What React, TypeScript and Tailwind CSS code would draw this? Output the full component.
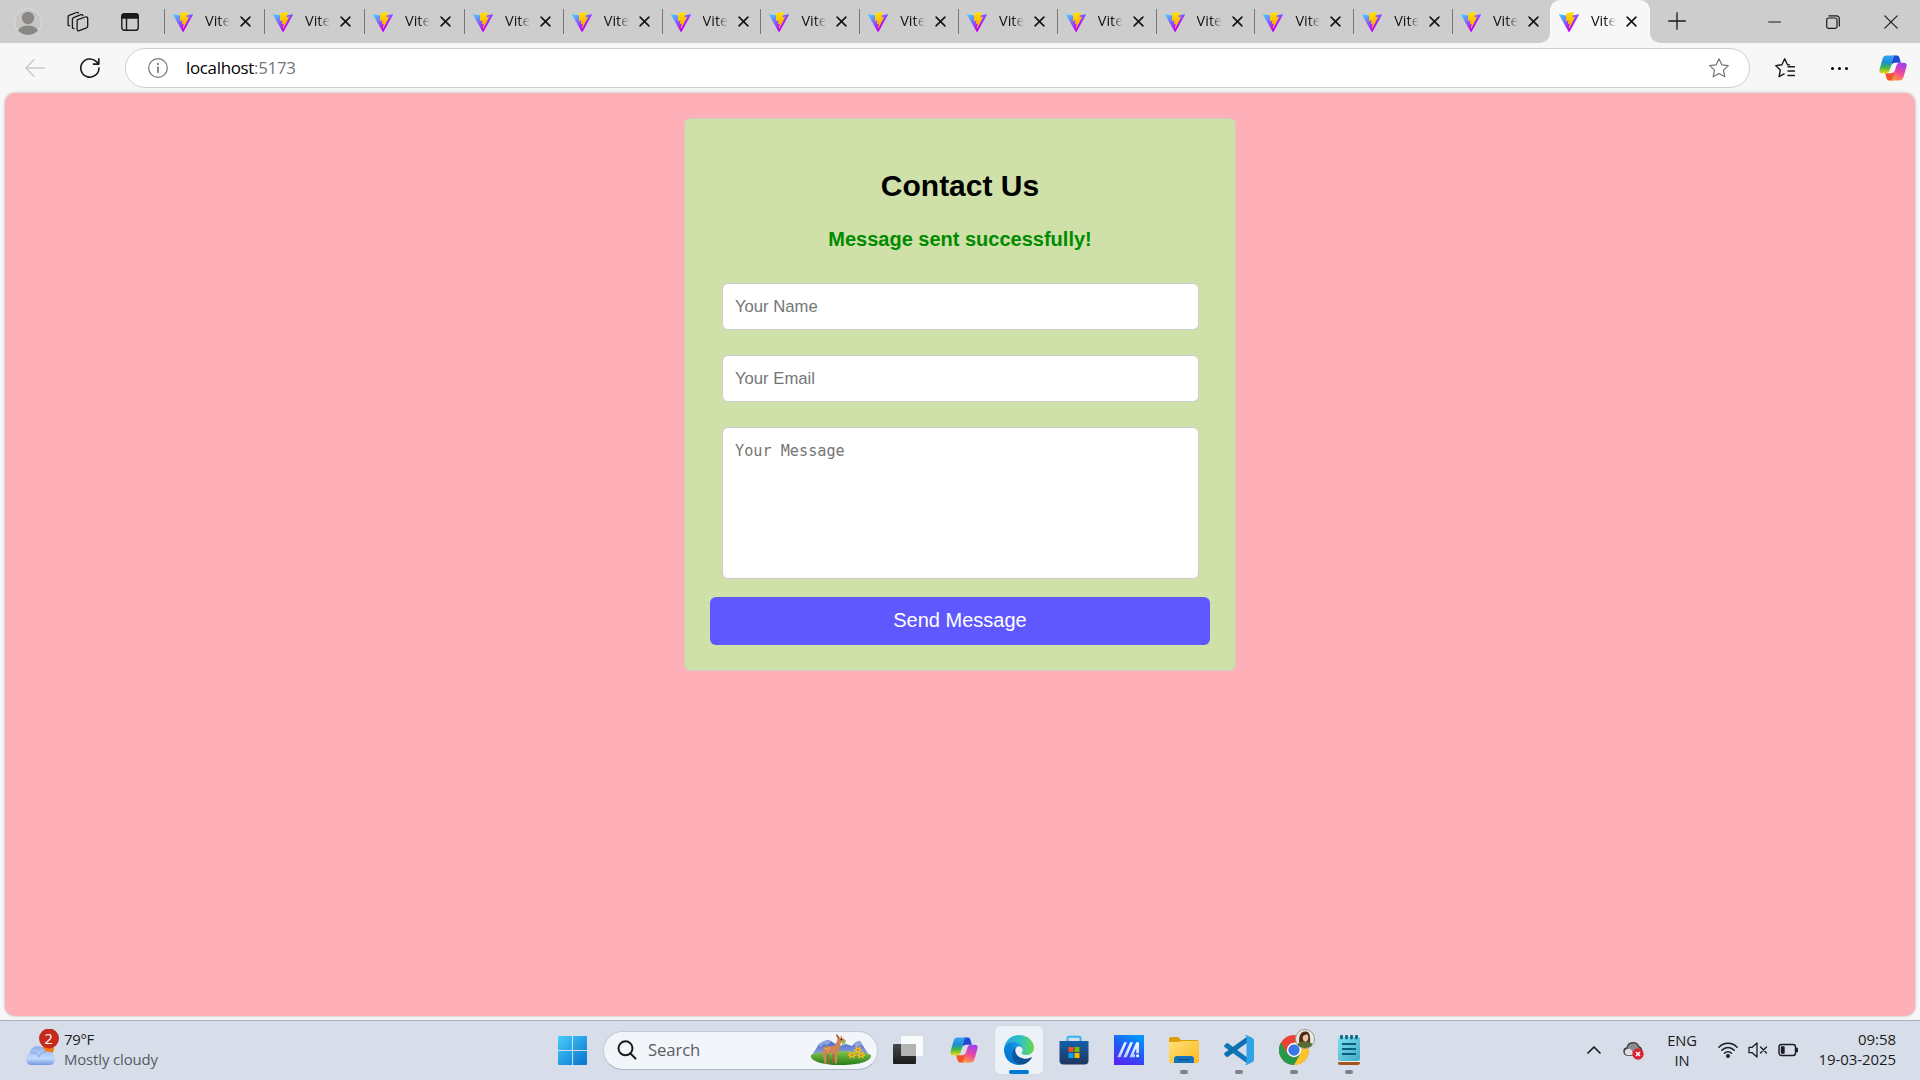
import type { ReactNode } from 'react';

function ViteLogo() {
  return (
    <svg viewBox="0 0 256 257" className="h-5 w-5 shrink-0" aria-hidden="true">
      <defs>
        <linearGradient id="viteA" x1="-.828%" x2="57.636%" y1="7.652%" y2="78.411%">
          <stop offset="0%" stopColor="#41D1FF" />
          <stop offset="100%" stopColor="#BD00FF" />
        </linearGradient>
        <linearGradient id="viteB" x1="43.376%" x2="50.316%" y1="2.242%" y2="89.03%">
          <stop offset="0%" stopColor="#FFEA00" />
          <stop offset="8%" stopColor="#FFDD00" />
          <stop offset="100%" stopColor="#FFA800" />
        </linearGradient>
      </defs>
      <path fill="url(#viteA)" d="M255.153 37.938L134.897 252.976c-2.483 4.44-8.862 4.466-11.382.048L.875 37.958c-2.746-4.814 1.371-10.646 6.827-9.67l120.385 21.517a6.537 6.537 0 0 0 2.322-.004l117.867-21.483c5.438-.991 9.574 4.796 6.877 9.62Z" />
      <path fill="url(#viteB)" d="M185.432.063L96.44 17.501a3.268 3.268 0 0 0-2.634 3.014l-5.474 92.456a3.268 3.268 0 0 0 3.997 3.378l24.777-5.718c2.318-.535 4.413 1.507 3.936 3.838l-7.361 36.047c-.495 2.426 1.782 4.5 4.151 3.78l15.304-4.649c2.372-.72 4.652 1.36 4.15 3.788l-11.698 56.621c-.732 3.542 3.979 5.473 5.943 2.437l1.313-2.028l72.516-144.72c1.215-2.423-.88-5.186-3.54-4.672l-25.505 4.922c-2.396.462-4.435-1.77-3.759-4.114l16.646-57.705c.677-2.35-1.37-4.583-3.769-4.113Z" />
    </svg>
  );
}

function Copilot({ className }: { className: string }) {
  return (
    <svg viewBox="0 0 28 26" className={className} aria-hidden="true">
      <defs>
        <linearGradient id="cpL" x1="0" y1="0" x2="0" y2="1">
          <stop offset="0" stopColor="#36a2f8" />
          <stop offset=".4" stopColor="#1d8fd0" />
          <stop offset=".65" stopColor="#39b54a" />
          <stop offset="1" stopColor="#f2dc10" />
        </linearGradient>
        <linearGradient id="cpR" x1=".6" y1="0" x2=".3" y2="1">
          <stop offset="0" stopColor="#a63af0" />
          <stop offset=".55" stopColor="#ef4a9b" />
          <stop offset="1" stopColor="#ff9a3d" />
        </linearGradient>
      </defs>
      <path d="M14 .5h3.8c1.5 0 2.2.8 2.6 2.2l1.5 5h-5.6c-2.5 0-3.5 1.5-4.1 3.4Z" fill="#2346d8" />
      <path d="M14 25.5h-3.600c-1.500 0-2.300-.900-2.800-2.300l-1.500-4.900h5.600c2.500 0 3.500-1.500 4.100-3.500Z" fill="#f5542a" />
      <path d="M7.500 .5h9.300c-1.400 .2-2.100 1.300-2.600 3l-3.500 11.500c-.7 2.200-1.900 3.300-4.100 3.300H3.200C.8 18.300-.1 16.600.5 14.400L3.500 4C4.200 1.600 5.400 .5 7.500 .5Z" fill="url(#cpL)" />
      <path d="M20.500 25.500h-9.300c1.400-.2 2.100-1.300 2.600-3l3.500-11.500c.7-2.200 1.900-3.300 4.100-3.300h3.400c2.400 0 3.300 1.700 2.700 3.900L24.500 22c-.7 2.400-1.900 3.500-4 3.500Z" fill="url(#cpR)" />
    </svg>
  );
}

function Line({ children, className, viewBox = '0 0 20 20', width = 1.3 }: { children: ReactNode; className: string; viewBox?: string; width?: number }) {
  return (
    <svg viewBox={viewBox} className={className} fill="none" stroke="currentColor" strokeWidth={width} strokeLinecap="round" strokeLinejoin="round" aria-hidden="true">
      {children}
    </svg>
  );
}

function TabContent() {
  return (
    <>
      <ViteLogo />
      <span className="ml-3 w-[25px] overflow-hidden bg-linear-to-r from-[#111] from-55% to-transparent bg-clip-text pb-0.5 text-[14.500px] leading-5 text-transparent">Vite</span>
      <Line className="ml-[10px] h-[11px] w-[11px] shrink-0 text-[#111]" viewBox="0 0 12 12" width={1.7}>
        <path d="M1.200 1.200l9.600 9.600M10.800 1.200l-9.600 9.600" />
      </Line>
    </>
  );
}

function TitleBar() {
  return (
    <div className="flex h-[43px] shrink-0 bg-[#cdcdcd] text-[#1a1a1a]">
      <div className="flex w-[164px] items-center pl-[14px]">
        <svg viewBox="0 0 28 28" className="h-7 w-7">
          <defs><clipPath id="avatar"><circle cx="14" cy="14" r="13" /></clipPath></defs>
          <circle cx="14" cy="14" r="13.300" fill="#c8c6c4" stroke="#dddbd8" />
          <g clipPath="url(#avatar)" fill="#8a8886"><circle cx="14" cy="10" r="6.200" /><ellipse cx="14" cy="24.500" rx="10.500" ry="7" /></g>
        </svg>
        <Line className="ml-[25px] h-[22px] w-[22px]" viewBox="0 0 22 22" width={1.3}>
          <path d="M10.800 8.600l7.700-2.600c1.300-.4 2.200.2 2.200 1.500v7.600c0 .8-.4 1.400-1.100 1.700l-7.400 2.900c-1.200.5-2.100 0-2.100-1.200v-8.200c0-.8.200-1.400.7-1.700ZM7 17.400c-1 .3-1.600-.2-1.600-1.200V8.300c0-.8.400-1.400 1.100-1.700l7.500-2.900c1-.3 1.700 0 1.900.8M2.600 14.700c-1 .3-1.500-.2-1.500-1.200V6c0-.8.300-1.300 1-1.600L9.500 1.500c.9-.3 1.600-.1 1.900.6" />
        </Line>
        <Line className="ml-[32px] h-[18px] w-[18px]" viewBox="0 0 18 18" width={1.4}>
          <rect x=".8" y=".8" width="16.400" height="16.400" rx="2.500" />
          <path d="M1 5V3a2 2 0 012-2h12a2 2 0 012 2v2Z" fill="currentColor" /><path d="M5.500 5v12" />
        </Line>
      </div>
      {Array.from({ length: 14 }, (_, i) => (
        <div key={i} className={`flex items-center ${i < 3 ? 'w-[100px]' : i < 13 ? 'w-[98.8px]' : 'w-[98px]'}`}>
          <span className="h-[25px] w-px bg-[#777]" />
          <span className="flex items-center pl-2"><TabContent /></span>
        </div>
      ))}
      <div className="relative flex w-[100px] items-center rounded-t-[10px] bg-[#f7f7f7] pl-[9px]">
        <svg viewBox="0 0 10 10" className="absolute bottom-0 -left-[10px] h-[10px] w-[10px]"><path d="M10 0v10H0A10 10 0 0010 0Z" fill="#f7f7f7" /></svg>
        <TabContent />
        <svg viewBox="0 0 10 10" className="absolute -right-[10px] bottom-0 h-[10px] w-[10px]"><path d="M0 0v10h10A10 10 0 010 0Z" fill="#f7f7f7" /></svg>
      </div>
      <div className="flex w-[54px] items-center justify-center pb-px">
        <Line className="h-[18px] w-[18px]" viewBox="0 0 18 18" width={1.3}><path d="M9 .7v16.600M.7 9h16.600" /></Line>
      </div>
      <div className="ml-auto flex items-center gap-[44px] pr-[22px]">
        <Line className="mr-px h-[14px] w-[14px]" viewBox="0 0 14 14" width={1.2}><path d="M1.700 7h12" /></Line>
        <Line className="h-[14px] w-[14px]" viewBox="0 0 14 14" width={1.2}><rect x=".7" y="3" width="10.300" height="10.300" rx="1.800" /><path d="M3 .8h7.500A2.800 2.800 0 0113.300 3.600V11" /></Line>
        <Line className="h-[14px] w-[14px]" viewBox="0 0 14 14" width={1.2}><path d="M.8.8l12.400 12.400M13.200.8L.8 13.200" /></Line>
      </div>
    </div>
  );
}

function Toolbar() {
  return (
    <div className="flex h-[50px] shrink-0 items-center bg-[#f7f7f7] text-[#1a1a1a]">
      <div className="flex w-[70px] justify-center">
        <Line className="h-5 w-5 text-[#c8c8c8]"><path d="M19.500 10H1M9 1.800L.8 10 9 18.200" /></Line>
      </div>
      <div className="flex w-10 justify-center">
        <Line className="h-5 w-5" width={1.6}><path d="M19 10a9.100 9.100 0 11-2.900-6.600l2.400 2.300M18.800.8v5.300h-5.400" /></Line>
      </div>
      <div className="ml-[15px] flex h-10 w-[1625px] items-center rounded-full border border-[#cfcfcf] bg-white pr-5 pl-[22px]">
        <Line className="h-5 w-5 text-[#747474]" width={1.200}><circle cx="10" cy="10" r="9.300" /><path d="M10 9v5.300" strokeWidth="1.700" /><circle cx="10" cy="6" r=".5" fill="currentColor" /></Line>
        <span className="ml-[18px] pb-px text-[16.900px] tracking-[-0.300px] text-black">localhost<span className="text-[#767676]">:5173</span></span>
        <Line className="ml-auto h-5 w-5 text-[#747474]" width={1.200}><path d="M10 .8l2.800 6 6.500.8-4.800 4.500 1.300 6.600L10 15.500l-5.800 3.200 1.300-6.600L.7 7.600l6.500-.8Z" /></Line>
      </div>
      <div className="flex w-[70px] justify-center">
        <Line className="h-5 w-5" width={1.400}><path d="M14.500 6.900l-2-.2L9.700.8 6.900 6.800l-6.200.8 4.600 4.500-1.200 6.600 5-2.800M13 8.800h6.500M13 13h6.500M13 17.500h6.500" /></Line>
      </div>
      <div className="flex w-[39px] items-center justify-center gap-1">
        <i className="h-[3px] w-[3px] rounded-full bg-black" /><i className="h-[3px] w-[3px] rounded-full bg-black" /><i className="h-[3px] w-[3px] rounded-full bg-black" />
      </div>
      <Copilot className="ml-5 h-[26px] w-7" />
    </div>
  );
}

function ContactForm() {
  return (
    <form className="mx-auto mt-[25px] flex h-[553px] w-[552px] flex-col items-center rounded-[6px] border border-[#cccccc] bg-[#cfe0a8] px-[25px] font-['Liberation_Sans',Arial,sans-serif]" onSubmit={(e) => e.preventDefault()}>
      <h2 className="mt-[49px] text-[30px] leading-[36px] font-bold text-black">Contact Us</h2>
      <p className="mt-[23px] text-[20px] leading-6 font-bold text-[#008b00]">Message sent successfully!</p>
      <input className="mt-[32px] ml-px h-[47px] w-[477px] shrink-0 rounded-[6px] border border-[#cccccc] bg-white px-[12px] text-[16.670px] text-black placeholder:text-[#757575]" placeholder="Your Name" />
      <input className="mt-[25px] ml-px h-[47px] w-[477px] shrink-0 rounded-[6px] border border-[#cccccc] bg-white px-[12px] text-[16.670px] text-black placeholder:text-[#757575]" placeholder="Your Email" />
      <textarea className="mt-[25px] ml-px h-[152px] w-[477px] shrink-0 resize-none rounded-[6px] border border-[#cccccc] bg-white px-[12px] py-[13px] font-['DejaVu_Sans_Mono',monospace] text-[15.200px] leading-5 text-black placeholder:text-[#757575]" placeholder="Your Message" />
      <button className="mt-[18px] h-[48px] w-[500px] shrink-0 rounded-[6px] bg-[#6058ff] pb-[2px] text-[20px] text-white">Send Message</button>
    </form>
  );
}

function Deer() {
  return (
    <svg viewBox="0 0 62 32" className="h-8 w-[62px]" aria-hidden="true">
      <defs>
        <linearGradient id="hill" x1="0" y1="0" x2="0" y2="1"><stop stopColor="#4562c0" /><stop offset="1" stopColor="#8fa6e4" /></linearGradient>
        <linearGradient id="grass" x1="0" y1="0" x2="0" y2="1"><stop stopColor="#86c44a" /><stop offset="1" stopColor="#227d16" /></linearGradient>
      </defs>
      <path d="M2 21L9 10l5-3 5-1 5 3 6 3 6-2 6 2 4-4 4-1 9 14Z" fill="url(#hill)" />
      <path d="M9 10l5-3 5-1 2 2-4 3-3-1-4 3ZM46 8l4-1 3 5-3-1-3 3-3-4Z" fill="#8fa6e2" />
      <path d="M1 21c10-5 49-5 60 0 1 5-9 10-30 10S-1 26 1 21Z" fill="url(#grass)" />
      <path d="M13 13.500c2-2 9-.5 12-2l2-4.500c0-2 1-3.500 3-3.500 2.500 0 5 1.700 5 3s-2 1.800-4 2l-2 8-2 3v10h-1.800l-1-9-5.200-1.500-3 1.500.5 9.500h-1.800l-2-9.500Z" fill="#d08453" />
      <path d="M28 5l-2-4 .5-1 3 3.500M31 3.500V1l1 2.500" fill="#93431f" />
      <path d="M18 20l1 10M23.500 20l-.5 9" stroke="#a85f35" strokeWidth="1.400" fill="none" />
      <circle cx="31.300" cy="5.500" r=".7" fill="#311" /><path d="M15 14.500h1.500M18 14h1.500M17 16h1.500" stroke="#ffdeb0" strokeWidth=".8" />
      <path d="M32 8l4-2-1 4-3 1Z" fill="#8ac44b" />
      {[[42, 21], [48, 16], [51, 21]].map(([x, y]) => (
        <g key={x} transform={`translate(${x} ${y})`} stroke="#f5bd28" strokeWidth="1.700" strokeLinecap="round">
          <path d="M-3.500 0h7M-2-2.500l4 5M2-2.500l-4 5" /><circle r=".7" stroke="#d47c10" fill="#d47c10" strokeWidth=".8" />
        </g>
      ))}
    </svg>
  );
}

const appIcons: { name: string; state: 'none' | 'open' | 'active'; art: ReactNode }[] = [
  { name: 'Task view', state: 'none', art: (
    <svg viewBox="0 0 30 30" className="mr-[2px] h-[30px] w-[30px]">
      <defs><linearGradient id="tv" x1="0" y1="0" x2="0" y2="1"><stop stopColor="#484848" /><stop offset="1" stopColor="#1b1b1b" /></linearGradient></defs>
      <rect x="0" y="9" width="23" height="20" rx="1" fill="url(#tv)" /><rect x="8" y="1" width="22" height="20" rx="1" fill="#fff" opacity=".84" /><path d="M8 9h15v12H8Z" fill="#b4b4b4" />
    </svg>) },
  { name: 'Copilot', state: 'none', art: <Copilot className="h-[26px] w-7" /> },
  { name: 'Edge', state: 'active', art: (
    <svg viewBox="0 0 256 256" className="h-[30px] w-[30px]">
      <defs>
        <linearGradient id="edA" x1="63" y1="177" x2="241" y2="177" gradientUnits="userSpaceOnUse"><stop stopColor="#0c59a4" /><stop offset="1" stopColor="#114a8b" /></linearGradient>
        <linearGradient id="edB" x1="157" y1="101" x2="46" y2="222" gradientUnits="userSpaceOnUse"><stop stopColor="#1b9de2" /><stop offset=".5" stopColor="#0a82d8" /><stop offset="1" stopColor="#0078d4" /></linearGradient>
        <linearGradient id="edC" x1="20" y1="70" x2="250" y2="90" gradientUnits="userSpaceOnUse"><stop stopColor="#2aa8d8" /><stop offset=".5" stopColor="#2fc2c8" /><stop offset="1" stopColor="#65d850" /></linearGradient>
      </defs>
      <path fill="url(#edA)" d="M231 190.500c-3.400 1.800-6.900 3.400-10.500 4.700a101.900 101.900 0 01-35.900 6.500c-47.300 0-88.500-32.500-88.500-74.300a31.500 31.500 0 0116.400-27.300c-42.800 1.800-53.800 46.400-53.800 72.500 0 73.900 68.100 81.400 82.800 81.400 7.900 0 19.800-2.300 27-4.600l1.300-.4a128.300 128.300 0 0066.600-52.800 4 4 0 00-5.400-5.700Z" />
      <path fill="url(#edB)" d="M105.700 241.400a79.200 79.200 0 01-22.700-21.300 80.700 80.700 0 0129.500-120c3.200-1.500 8.500-4.100 15.600-4a32.400 32.400 0 0125.700 13 31.900 31.900 0 016.300 18.700c0-.2 24.500-79.600-80-79.600C36.100 48.200 0 90 0 126.600a130.200 130.200 0 0012.100 56 128 128 0 00156.400 67.100 75.500 75.500 0 01-62.800-8.300Z" />
      <path fill="url(#edC)" d="M152.300 148.900c-.9 1-3.400 2.500-3.400 5.600 0 2.600 1.700 5.200 4.800 7.300 14.400 10.100 41.700 8.700 41.800 8.700a59.700 59.700 0 0030.300-8.300A61.500 61.500 0 00256 109.200c.3-22.400-8-37.300-11.300-43.900C223.500 23.900 177.700 0 128 0A128 128 0 000 126.200c.5-36.500 36.800-66 80-66 3.500 0 23.500.3 42 10.100 16.300 8.500 24.900 18.900 30.800 29.200 6.200 10.600 7.300 24.100 7.300 29.500s-2.700 13.300-7.800 19.900Z" />
    </svg>) },
  { name: 'Store', state: 'none', art: (
    <svg viewBox="0 0 30 30" className="h-[30px] w-[30px]">
      <defs><linearGradient id="st" x1="0" y1="0" x2="0" y2="1"><stop stopColor="#1260a8" /><stop offset="1" stopColor="#21355d" /></linearGradient></defs>
      <path d="M8.500 7V3.300a1.500 1.500 0 011.500-1.500h10a1.500 1.500 0 011.500 1.500V7" fill="none" stroke="#31b5ef" strokeWidth="2" />
      <path d="M.5 6h29v19.500a4 4 0 01-4 4h-21a4 4 0 01-4-4Z" fill="url(#st)" />
      <path d="M9.500 12H14.500v5h-5Z" fill="#f25022" /><path d="M15.500 12h5v5h-5Z" fill="#7fba00" /><path d="M9.500 18h5v5h-5Z" fill="#00a4ef" /><path d="M15.500 18h5v5h-5Z" fill="#ffb900" />
    </svg>) },
  { name: 'MyASUS', state: 'none', art: (
    <svg viewBox="0 0 30 30" className="h-[30px] w-[30px]">
      <defs>
        <linearGradient id="ma" x1=".7" y1="0" x2=".2" y2="1"><stop stopColor="#0096ff" /><stop offset=".5" stopColor="#2456f2" /><stop offset="1" stopColor="#5a22f5" /></linearGradient>
        <linearGradient id="mb" x1="0" y1="0" x2="0" y2="1"><stop stopColor="#fff" /><stop offset="1" stopColor="#b9c8fb" /></linearGradient>
      </defs>
      <path d="M0 0h30v30H0Z" fill="url(#ma)" />
      <path d="M3.300 22.300L10.300 7.300h2.500L6.500 22.300ZM9.300 22.300L16.300 7.300h2.700L12.700 22.300ZM15.500 22.300L22.300 7.300H25v11h-2.800v-5l-2.700 6h1.500v3Z" fill="url(#mb)" /><circle cx="23.600" cy="20.800" r="1.500" fill="#fff" />
    </svg>) },
  { name: 'File Explorer', state: 'open', art: (
    <svg viewBox="0 0 30 30" className="h-[30px] w-[30px]">
      <defs><linearGradient id="fe" x1="0" y1="0" x2="1" y2="1"><stop stopColor="#ffe078" /><stop offset="1" stopColor="#fcb91c" /></linearGradient></defs>
      <path d="M0 4a2 2 0 012-2h7l3 3h16a2 2 0 012 2v6H0Z" fill="#dd9e08" /><path d="M0 7h9l4-1h17v20a2 2 0 01-2 2H2a2 2 0 01-2-2Z" fill="url(#fe)" /><path d="M5 28v-4a3 3 0 013-3h14a3 3 0 013 3v4Z" fill="#1473bd" /><path d="M9 24.500h12" stroke="#0b4d91" strokeWidth="1.200" />
    </svg>) },
  { name: 'Code', state: 'open', art: (
    <svg viewBox="0 0 30 30" className="h-[30px] w-[30px]">
      <path d="M.6 9.900L2.400 8.300q.8-.7 1.700 0L24 23v6L.7 12.200Q-.4 11 .6 9.900Z" fill="#1377b8" />
      <path d="M.6 20.100L2.400 21.700q.8.700 1.700 0L24 7V1L.7 17.800Q-.4 19 .6 20.100Z" fill="#0f70b0" />
      <path d="M20.500.7Q21.500-.2 23 .3l5.700 2.800Q30 3.800 30 5.300v19.400q0 1.500-1.300 2.200L23 29.700q-1.500.5-2.500-.4 2 .5 2-1.800v-25q0-2.300-2-1.800Z" fill="#2ea3e8" />
    </svg>) },
  { name: 'Chrome', state: 'open', art: (
    <svg viewBox="0 0 36 36" className="mb-[6px] ml-[6px] h-9 w-9 shrink-0">
      <circle cx="15" cy="21" r="15" fill="#ea4335" />
      <path d="M2 13.500A15 15 0 0015 36l6.500-11.300L15 28.500l-6.500-3.800Z" fill="#279a49" /><path d="M15 36a15 15 0 0013-22.500H15l6.500 11.200Z" fill="#fbc62d" />
      <circle cx="15" cy="21" r="7.200" fill="#fff" /><circle cx="15" cy="21" r="5.700" fill="#3b78e7" />
      <circle cx="26" cy="10" r="9.500" fill="#ece9df" stroke="#969a96" />
      <path d="M20 13c0-3 0-10 5.500-10.500S31.500 7 31 14Z" fill="#522d22" /><path d="M18.500 15.500c1-3 5-3 7-3s6 0 8 3c-2 4-12 5-15 0Z" fill="#556c31" /><ellipse cx="26.500" cy="8.500" rx="2.700" ry="4" fill="#efc5a1" /><path d="M23 8c0-5 5-5 6.500-3l-4 1Z" fill="#432519" />
    </svg>) },
  { name: 'Notepad', state: 'open', art: (
    <svg viewBox="0 0 24 30" className="h-[30px] w-6">
      <defs><linearGradient id="np" x1="0" y1="0" x2="1" y2="1"><stop stopColor="#7de0ee" /><stop offset="1" stopColor="#42a9c6" /></linearGradient></defs>
      <path d="M1 24h22v3.500a2.500 2.500 0 01-2.500 2.500h-17A2.500 2.500 0 011 27.500Z" fill="#a7531c" /><path d="M1 24h22v3H1Z" fill="#eee" /><rect x="1" y="2" width="22" height="24" rx="2" fill="url(#np)" />
      <path d="M5 9h14M5 14h14M5 19h14" stroke="#075e7d" strokeWidth="1.800" /><path d="M4.500 1v2M9.500 1v2M14.500 1v2M19.500 1v2" stroke="#126583" strokeWidth="2.800" strokeLinecap="round" />
    </svg>) },
];

function Taskbar() {
  return (
    <div className="flex h-[60px] shrink-0 items-center border-t border-[#a9b0bd] bg-[#d7dee9] pb-px text-[#1b1c20]">
      <div className="flex w-[545px] items-center pl-[25px]">
        <svg viewBox="0 0 36 36" className="mb-1 h-9 w-9 self-start" aria-hidden="true">
          <defs><linearGradient id="cloud" x1="0" y1="0" x2="0" y2="1"><stop stopColor="#8bb0f0" /><stop offset=".65" stopColor="#c4dafb" /><stop offset="1" stopColor="#7499e1" /></linearGradient></defs>
          <circle cx="23" cy="20" r="6" fill="#f27d1b" />
          <path d="M5 36a5 6 0 01-.5-11.500C5 19.500 9 17 13 17c4 0 6.500 2 7.500 6 4-2 9.500 1 9.500 6.500 0 4-2 6.500-6 6.500Z" fill="url(#cloud)" /><path d="M5 24.500c5-2 9 1 9 4M21 23c-4 0-6 2-7 5" fill="none" stroke="#7198de" strokeWidth="1" opacity=".7" />
          <circle cx="24" cy="9.500" r="10" fill="#c42b1c" />
          <text x="23.700" y="14.700" textAnchor="middle" fill="#fff" fontFamily="Open Sans" fontSize="14.500">2</text>
        </svg>
        <div className="mb-[3px] ml-[3px] text-[14.900px] leading-5">
          <div className="tracking-[-0.300px]">79°F</div><div className="tracking-[-0.120px] text-[#565a62]">Mostly cloudy</div>
        </div>
      </div>
      <div className="flex w-[55px] justify-center">
        <svg viewBox="0 0 29 29" className="h-[29px] w-[29px]" aria-hidden="true">
          <defs><linearGradient id="win" x1="0" y1="0" x2="1" y2="1" ><stop stopColor="#48cdfb" /><stop offset="1" stopColor="#0572d0" /></linearGradient></defs>
          <path d="M1 0h13v14H0V1a1 1 0 011-1ZM15 0h13a1 1 0 011 1v13H15ZM0 15h14v14H1a1 1 0 01-1-1ZM15 15h14v13a1 1 0 01-1 1H15Z" fill="url(#win)" />
        </svg>
      </div>
      <div className="ml-[3px] flex h-[39px] w-[275px] items-center rounded-full border border-[#c3cbd8] border-b-[#aeb7c5] bg-[#f2f5fa] pr-[5px] pl-[13px]">
        <Line className="h-5 w-5" width={2}><circle cx="8.500" cy="8.300" r="7" /><path d="M13.500 13.500l5 5" /></Line>
        <span className="ml-[11px] text-[16.700px] tracking-[-0.1px] text-[#5a5c62]">Search</span>
        <span className="ml-auto"><Deer /></span>
      </div>
      <div className="ml-[3px] flex">
        {appIcons.map((app) => (
          <div key={app.name} className="flex w-[55px] justify-center">
            <div className={`relative flex h-12 w-12 items-center justify-center rounded-[5px] ${app.state === 'active' ? 'bg-[#edf1f8] shadow-[0_0_1px_#b4bccb]' : ''}`}>
              {app.art}
              {app.state !== 'none' && <i className={`absolute bottom-0 h-1 rounded-full ${app.state === 'active' ? 'w-5 bg-[#0078d4]' : 'w-2 bg-[#7b8089]'}`} />}
            </div>
          </div>
        ))}
      </div>
      <div className="ml-auto flex items-center pr-[24px]">
        <Line className="h-[14px] w-[14px]" viewBox="0 0 14 14" width={1.700}><path d="M1 10l6-6 6 6" /></Line>
        <svg viewBox="0 0 21 20" className="ml-[22px] h-5 w-[21px]">
          <path d="M4 15C0 14 0 8 4 8c1-7 10-7 12-1 4 1 3 8-1 8Z" fill="#8a8a8a" stroke="#3c3c3c" strokeWidth="1.300" /><path d="M4 15c-3-1-3-5 1-6 3-1 5 3 6 6Z" fill="#e0e0e0" />
          <circle cx="15" cy="14" r="5.700" fill="#d92532" /><path d="M13 12l4 4M17 12l-4 4" stroke="#fff" strokeWidth="1.500" />
        </svg>
        <div className="mb-px ml-[22px] w-[32px] text-center text-[14.700px] leading-5 tracking-[-0.200px]">ENG<br />IN</div>
        <Line className="ml-[20px] h-5 w-5" width={1.500}>
          <path d="M1 7.200c5-5.300 13-5.300 18 0M3.800 10.300c3.500-3.700 8.900-3.700 12.400 0M6.500 13.200c2-2 5-2 7 0" /><circle cx="10" cy="16" r="1.200" fill="currentColor" />
        </Line>
        <Line className="ml-[10px] h-5 w-5" width={1.300}><path d="M1 7.300h3.200L9 3v14l-4.800-4.300H1ZM12.500 7l6 6M18.500 7l-6 6" /></Line>
        <Line className="ml-[10px] h-5 w-[21px]" viewBox="0 0 21 20" width={1.400}><rect x="1" y="4.500" width="16.500" height="11" rx="2.500" /><path d="M3.500 7h2.500v6H3.500Z" fill="currentColor" /><path d="M19 8.500v3" strokeWidth="2" /></Line>
        <div className="mb-[3px] ml-[18px] w-[79px] text-right text-[15px] leading-5 tracking-[-0.070px] whitespace-nowrap">09:58<br />19-03-2025</div>
      </div>
    </div>
  );
}

export default function App() {
  return (
    <div className="flex h-[1080px] w-[1920px] flex-col overflow-hidden bg-[#f7f7f7] font-['Open_Sans','Noto_Sans',sans-serif]">
      <TitleBar />
      <Toolbar />
      <main className="mx-[5px] mb-1 flex flex-1 flex-col rounded-[10px] bg-[#ffafb8] shadow-[0_0_3px_rgba(0,0,0,0.3)]">
        <ContactForm />
      </main>
      <Taskbar />
    </div>
  );
}
